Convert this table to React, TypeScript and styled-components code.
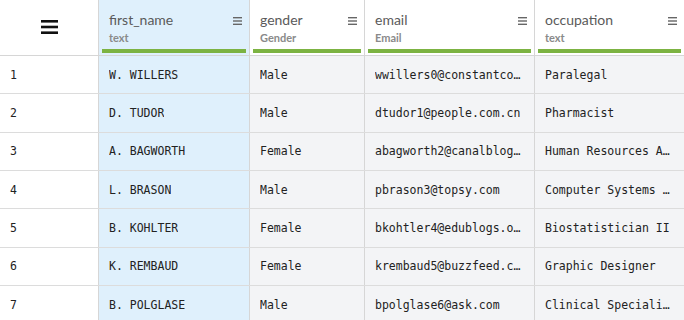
import React from "react";
import styled, { createGlobalStyle } from "styled-components";

const Global = createGlobalStyle`
  html, body { margin: 0; padding: 0; background: #fff; }
  body { width: 684px; height: 320px; overflow: hidden; }
`;

const COLS = "99px 151px 115px 170px 149px";

const Grid = styled.div`
  width: 684px;
  font-family: Lato, "Open Sans", "Liberation Sans", sans-serif;
`;

const HeaderRow = styled.div`
  display: grid;
  grid-template-columns: ${COLS};
  height: 56px;
  border-bottom: 1px solid #d6d6d6;
  box-sizing: border-box;
`;

const Corner = styled.div`
  display: flex;
  align-items: center;
  justify-content: center;
  border-right: 1px solid #d6d6d6;
  padding-bottom: 2px;
`;

const HeadCell = styled.div<{ $active?: boolean }>`
  position: relative;
  display: flex;
  flex-direction: column;
  background: ${(p) => (p.$active ? "#dff0fc" : "#fff")};
  border-right: 1px solid #d6d6d6;
  padding: 9px 0 0 10px;
  box-sizing: border-box;
  &:last-child { border-right: none; }
`;

const Title = styled.div`
  font-size: 14px;
  color: #5a5a5a;
  line-height: 21px;
`;

const Sub = styled.div`
  font-size: 11px;
  font-weight: 700;
  color: #8a8a8a;
  line-height: 14px;
  margin-top: 1px;
`;

const Bar = styled.div`
  position: absolute;
  left: 3px;
  right: 3px;
  bottom: 2px;
  height: 4px;
  background: #7cb342;
`;

const MenuIcon = styled.svg`
  position: absolute;
  right: 7px;
  top: 17px;
`;

const Row = styled.div`
  display: grid;
  grid-template-columns: ${COLS};
  height: 38.33px;
  border-bottom: 1px solid #dcdcdc;
  box-sizing: border-box;
`;

const NumCell = styled.div`
  display: flex;
  align-items: center;
  padding-left: 10px;
  font-family: "DejaVu Sans Mono", "Liberation Mono", monospace;
  font-size: 11.5px;
  color: #222;
  background: #fff;
  border-right: 1px solid #d6d6d6;
`;

const Cell = styled.div<{ $active?: boolean }>`
  display: flex;
  align-items: center;
  padding: 0 8px 0 10px;
  font-family: "DejaVu Sans Mono", "Liberation Mono", monospace;
  font-size: 11.5px;
  color: #222;
  background: ${(p) => (p.$active ? "#dff0fc" : "#f3f4f6")};
  border-right: 1px solid #d6d6d6;
  overflow: hidden;
  min-width: 0;
  &:last-child { border-right: none; }
`;

const Text = styled.span`
  white-space: nowrap;
  overflow: hidden;
  text-overflow: ellipsis;
`;

const rows = [
  ["W. WILLERS", "Male", "wwillers0@constantcontact.com", "Paralegal"],
  ["D. TUDOR", "Male", "dtudor1@people.com.cn", "Pharmacist"],
  ["A. BAGWORTH", "Female", "abagworth2@canalblog.com", "Human Resources Assistant"],
  ["L. BRASON", "Male", "pbrason3@topsy.com", "Computer Systems Analyst"],
  ["B. KOHLTER", "Female", "bkohtler4@edublogs.org", "Biostatistician II"],
  ["K. REMBAUD", "Female", "krembaud5@buzzfeed.com", "Graphic Designer"],
  ["B. POLGLASE", "Male", "bpolglase6@ask.com", "Clinical Specialist"],
];

const headers = [
  { title: "first_name", sub: "text", menu: true, active: true },
  { title: "gender", sub: "Gender", menu: true },
  { title: "email", sub: "Email", menu: true },
  { title: "occupation", sub: "text", menu: true },
];

const Small = () => (
  <MenuIcon width="9" height="8" viewBox="0 0 9 8">
    <rect x="0" y="0" width="9" height="1.4" fill="#666" />
    <rect x="0" y="3.3" width="9" height="1.4" fill="#666" />
    <rect x="0" y="6.6" width="9" height="1.4" fill="#666" />
  </MenuIcon>
);

export default function App() {
  return (
    <>
      <Global />
      <Grid>
        <HeaderRow>
          <Corner>
            <svg width="17" height="14" viewBox="0 0 17 14">
              <rect x="0" y="0" width="17" height="2.6" fill="#111" />
              <rect x="0" y="5.7" width="17" height="2.6" fill="#111" />
              <rect x="0" y="11.4" width="17" height="2.6" fill="#111" />
            </svg>
          </Corner>
          {headers.map((h) => (
            <HeadCell key={h.title} $active={h.active}>
              <Title>{h.title}</Title>
              <Sub>{h.sub}</Sub>
              {h.menu && <Small />}
              <Bar />
            </HeadCell>
          ))}
        </HeaderRow>
        {rows.map((r, i) => (
          <Row key={i}>
            <NumCell>{i + 1}</NumCell>
            {r.map((v, j) => (
              <Cell key={j} $active={j === 0}>
                <Text>{v}</Text>
              </Cell>
            ))}
          </Row>
        ))}
      </Grid>
    </>
  );
}
